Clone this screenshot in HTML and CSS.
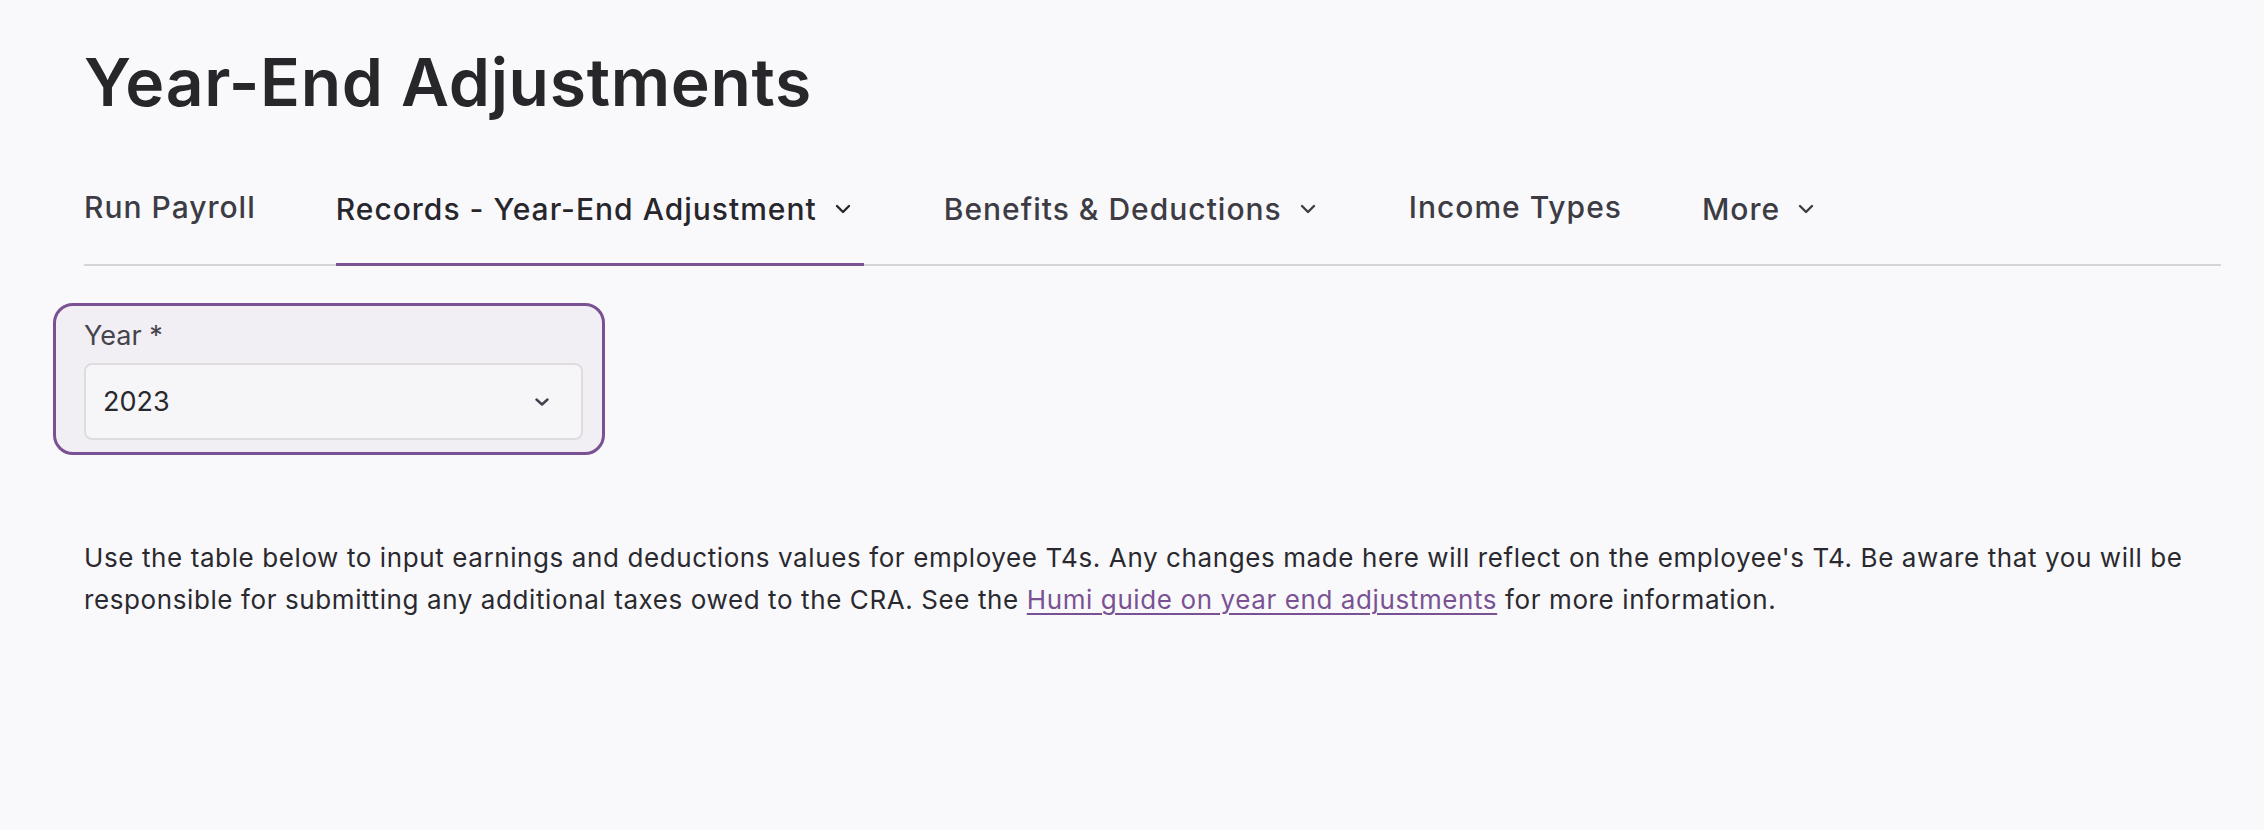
FILE: index.html
```html
<!DOCTYPE html>
<html lang="en">
<head>
<meta charset="utf-8">
<title>Year-End Adjustments</title>
<link rel="stylesheet" href="styles.css">
</head>
<body>
<main class="page">
  <h1 class="title">Year-End Adjustments</h1>

  <nav class="tabs">
    <a class="tab plain">Run Payroll</a>
    <a class="tab active">Records - Year-End Adjustment
      <svg class="tab-chev" viewBox="0 0 16 10" width="16" height="10"><path d="M2 2 L8 8 L14 2" /></svg>
    </a>
    <a class="tab">Benefits &amp; Deductions
      <svg class="tab-chev" viewBox="0 0 16 10" width="16" height="10"><path d="M2 2 L8 8 L14 2" /></svg>
    </a>
    <a class="tab plain">Income Types</a>
    <a class="tab">More
      <svg class="tab-chev" viewBox="0 0 16 10" width="16" height="10"><path d="M2 2 L8 8 L14 2" /></svg>
    </a>
  </nav>

  <div class="field-box">
    <div class="field-label">Year *</div>
    <div class="select">
      <span class="select-value">2023</span>
      <svg class="select-chev" viewBox="0 0 14 8" width="14" height="8"><path d="M1.5 1.5 L7 6.5 L12.5 1.5" /></svg>
    </div>
  </div>

  <p class="intro">Use the table below to input earnings and deductions values for employee T4s. Any changes made here will reflect on the employee's T4. Be aware that you will be responsible for submitting any additional taxes owed to the CRA. See the <a class="link">Humi guide on year end adjustments</a> for more information.</p>
</main>
</body>
</html>
```

FILE: styles.css
```css
html, body {
  margin: 0;
  padding: 0;
  background: #f9f9fb;
}

body {
  font-family: "Inter", "Liberation Sans", sans-serif;
  color: #2a292f;
}

.page {
  padding: 42px 43px 0 84px;
}

.title {
  margin: 0;
  font-size: 66px;
  line-height: 80px;
  font-weight: 600;
  color: #27272b;
  letter-spacing: 0.7px;
}

.tabs {
  margin-top: 67px;
  display: flex;
  align-items: flex-end;
  gap: 80px;
  box-shadow: inset 0 -2px 0 #d5d4d9;
}

.tab {
  display: flex;
  align-items: center;
  font-size: 30px;
  line-height: 36px;
  font-weight: 500;
  letter-spacing: 1px;
  color: #3d3c44;
  padding-bottom: 36px;
  border-bottom: 3px solid transparent;
  cursor: pointer;
}

.tab.plain {
  padding-bottom: 38px;
}

.tab.active {
  color: #27262c;
  border-bottom-color: #7a5294;
}

.tab-chev {
  margin-left: 18px;
  margin-right: 13px;
  fill: none;
  stroke: currentColor;
  stroke-width: 2.4;
  stroke-linecap: round;
  stroke-linejoin: round;
}

.field-box {
  margin-top: 37px;
  margin-left: -31px;
  width: 499px;
  padding: 12px 19px 12px 28px;
  border: 3px solid #7a5294;
  border-radius: 20px;
  background: #f1eff4;
}

.field-label {
  font-size: 27px;
  line-height: 36px;
  color: #45444c;
  margin-bottom: 9px;
}

.select {
  height: 73px;
  display: flex;
  align-items: center;
  justify-content: space-between;
  padding: 0 32px 0 17px;
  border: 2px solid #dedce1;
  border-radius: 8px;
  background: #f6f6f9;
}

.select-value {
  font-size: 27px;
  color: #29282e;
}

.select-chev {
  fill: none;
  stroke: #3f4350;
  stroke-width: 2.4;
  stroke-linecap: round;
  stroke-linejoin: round;
}

.intro {
  margin: 82px 0 0 0;
  font-size: 26px;
  line-height: 42px;
  letter-spacing: 0.6px;
  color: #2a292f;
}

.link {
  color: #7a5294;
  text-decoration: underline;
  text-decoration-thickness: 1.5px;
  text-underline-offset: 4px;
  cursor: pointer;
}
```
